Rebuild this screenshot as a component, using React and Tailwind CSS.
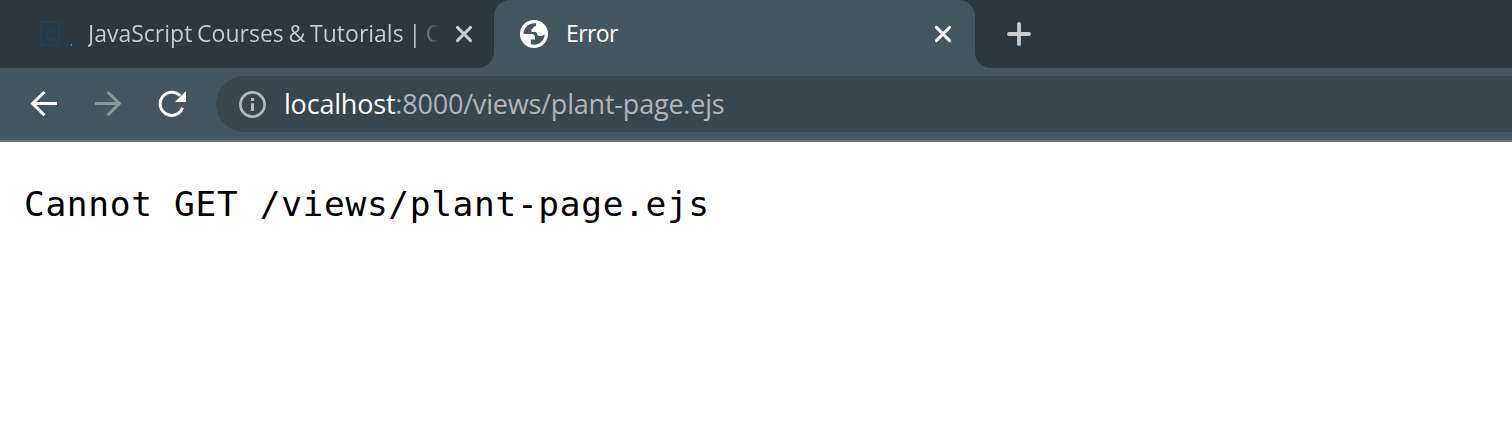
function Close({ className }) {
  return (
    <svg className={className} width="18" height="18" viewBox="0 0 18 18" fill="none" stroke="currentColor" strokeWidth="2.9" strokeLinecap="round">
      <path d="M2.4 2.4 15.6 15.6M15.6 2.4 2.4 15.6" />
    </svg>
  );
}

function Globe() {
  return (
    <svg width="28" height="28" viewBox="0 0 28 28" className="shrink-0">
      <circle cx="14" cy="14" r="14" fill="#fff" />
      <path
        d="M16 3.2C9 2.6 3.6 7.4 3.6 14H11.5C14 14 15 15.4 15 17V19.5H10.8V24.2C18 26.3 24.6 21 24.7 14.2C23 16.2 20 16.4 18 15.4C16.6 14.6 17.2 12.2 15.5 12H11.5V9C13 8.8 13.6 8 13.6 6.6H15C16 6.2 16.5 5 16 3.2Z"
        fill="#455660"
      />
    </svg>
  );
}

export default function App() {
  return (
    <div className="flex h-[440px] w-[1512px] flex-col overflow-hidden bg-white font-['Open_Sans','Noto_Sans',sans-serif]">
      <div className="flex h-[68px] shrink-0 bg-[linear-gradient(#2d383e_50%,#455660_50%)]">
        <div className="flex w-[494px] shrink-0 items-center rounded-br-2xl bg-[#2d383e] pl-10">
          <svg width="32" height="28" viewBox="0 0 32 28" className="mr-4 shrink-0">
            <path d="M1 2H19V25H1Z" fill="none" stroke="#1e4159" strokeWidth="2" />
            <path d="M13.6 11.4C9.8 9.7 6.6 11.7 6.6 15.2C6.6 18.8 10 20.7 13.8 19.1" fill="none" stroke="#1e4159" strokeWidth="2.6" />
            <path d="M23.5 25H31" stroke="#1e4159" strokeWidth="2" />
            <path d="M31.5 24V26" stroke="#70858f" strokeWidth="1" />
          </svg>
          <div className="w-[354px] shrink-0 overflow-hidden whitespace-nowrap bg-[linear-gradient(90deg,#cacdce_330px,#7b8387_338px,#2d383e_352px)] bg-clip-text pb-0.5 text-[23px] leading-8 text-transparent [word-spacing:-1.2px]">
            JavaScript Courses &amp; Tutorials | C
          </div>
          <Close className="ml-[13px] shrink-0 text-[#cacdce]" />
        </div>
        <div className="flex w-[481px] shrink-0 items-center rounded-t-2xl bg-[#455660] pl-[26px] pr-[23px]">
          <Globe />
          <div className="ml-[18px] pb-0.5 text-[23px] leading-8 tracking-[-0.6px] text-white">Error</div>
          <Close className="ml-auto text-white" />
        </div>
        <div className="flex flex-1 items-center rounded-bl-2xl bg-[#2d383e] pl-8">
          <svg width="24" height="24" viewBox="0 0 24 24" stroke="#cacdce" strokeWidth="3.8" strokeLinecap="round">
            <path d="M2 12H22M12 2V22" />
          </svg>
        </div>
      </div>
      <div className="flex h-[74px] shrink-0 items-center border-b-2 border-[#6c7c83] bg-[#455660] pl-[30px]">
        <svg width="28" height="28" viewBox="0 0 28 28" fill="none" stroke="#fff" strokeWidth="3">
          <path d="M27 13.6H3M14.4 2 2.6 13.6 14.4 25.2" />
        </svg>
        <svg width="28" height="28" viewBox="0 0 28 28" fill="none" stroke="#8c979c" strokeWidth="3" className="ml-9">
          <path d="M1 13.6H25M13.6 2 25.4 13.6 13.6 25.2" />
        </svg>
        <svg width="28" height="28" viewBox="0 0 28 28" className="ml-9">
          <path d="M24.6 17.8A11.6 11.6 0 1 1 22.2 5.8" fill="none" stroke="#fff" strokeWidth="3" />
          <path d="M28 1V12H17Z" fill="#fff" />
        </svg>
        <div className="ml-[30px] flex h-14 flex-1 items-center rounded-l-full bg-[#3a464d] pl-[22px]">
          <svg width="28" height="28" viewBox="0 0 28 28" fill="none" stroke="#b4b9bc" className="shrink-0">
            <circle cx="14.5" cy="14.5" r="12.1" strokeWidth="2.7" />
            <path d="M14.5 13.2V21M14.5 8V11" strokeWidth="3" />
          </svg>
          <div className="ml-[18px] whitespace-nowrap text-[27px] leading-9 tracking-[-0.2px] text-[#b1b5b8]">
            <span className="text-white">localhost</span>
            <span>:8000/views/plant-page.ejs</span>
          </div>
        </div>
      </div>
      <pre className="pl-6 pt-[41px] font-['DejaVu_Sans_Mono',monospace] text-[34.5px] leading-[42px] tracking-[0.66px] text-black">Cannot GET /views/plant-page.ejs</pre>
    </div>
  );
}
